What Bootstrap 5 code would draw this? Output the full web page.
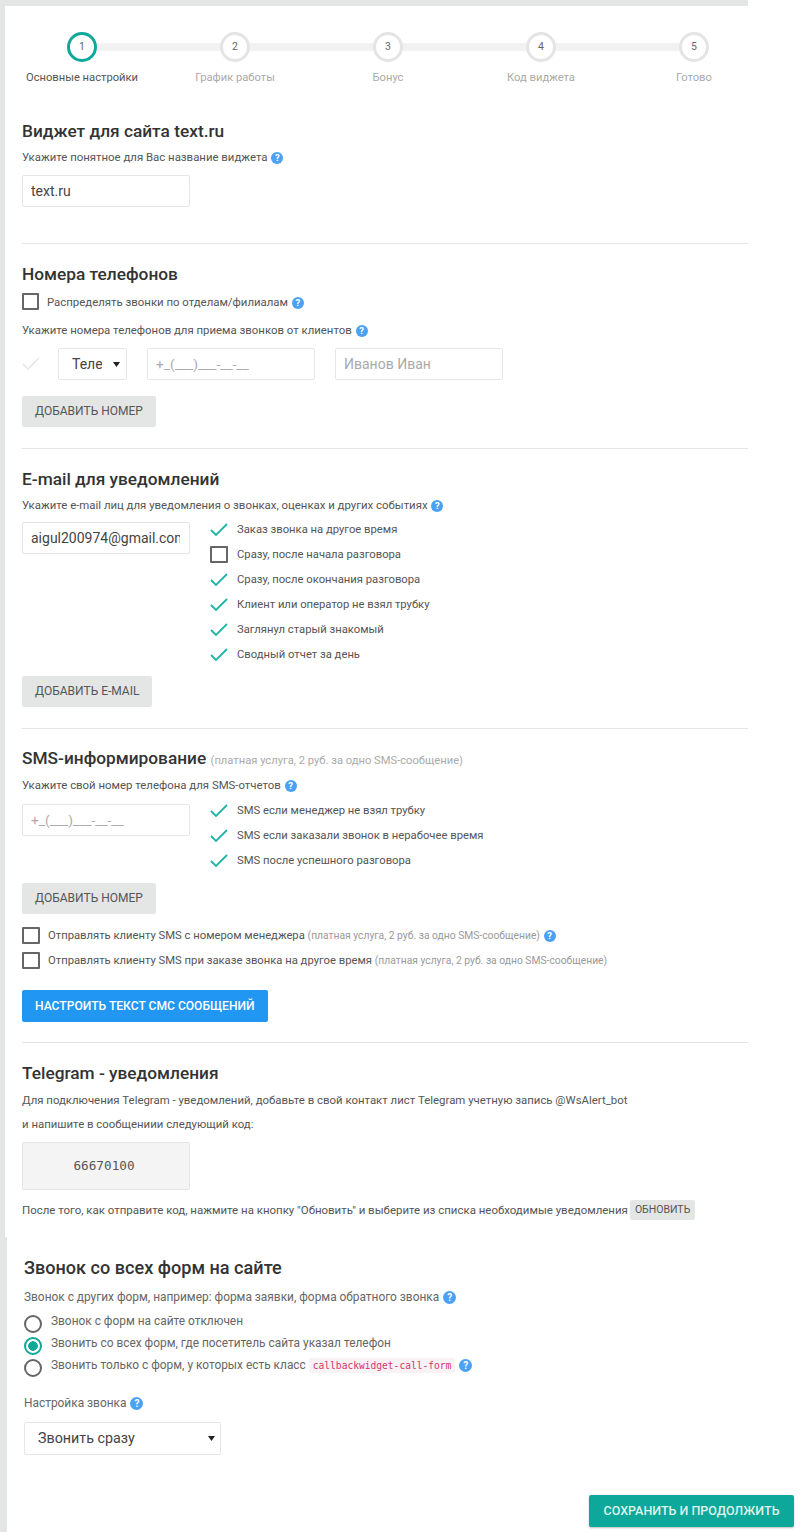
<!DOCTYPE html>
<html lang="ru">
<head>
    <meta charset="UTF-8">
    <meta name="viewport" content="width=device-width, initial-scale=1.0">
    <title>Виджет</title>
    <link href="https://cdn.jsdelivr.net/npm/bootstrap@5.3.3/dist/css/bootstrap.min.css" rel="stylesheet">
    <style>
        body { font-family: Roboto, "Liberation Sans", sans-serif; color: #555; background: #fff; font-size: 11.4px; line-height: 16px; overflow-x: hidden; }
        .sheet { width: 748px; background: #e4e6e5; padding: 6px 0 0 5px; }
        .sheet-inner { background: #fff; height: 1231px; padding: 0 0 0 17px; }
        .sheet-low { border-left: 7px solid #e4e6e5; padding: 0 6px 0 17px; height: 295px; font-size: 11.9px; color: #666; }
        .wz-steps { margin: 0 0 0 -16.5px; padding-top: 26px; }
        .wz-step { flex: none; width: 153px; position: relative; text-align: center; font-size: 11.2px; color: #aaa; }
        .wz-step.on { color: #555; }
        .wz-step:not(:last-child)::after { content: ""; position: absolute; top: 11px; left: 76px; width: 153px; height: 8px; background: #f2f2f2; }
        .wz-dot { position: relative; z-index: 1; width: 30px; height: 30px; margin: 0 auto 8px; border: 3px solid #e4e4e4; border-radius: 50%; background: #fff; font-size: 10.5px; line-height: 24px; color: #666; }
        .wz-step.on .wz-dot { border-color: #0fa899; }
        .wz-step-lbl { height: 16px; white-space: nowrap; }
        .sec-title { font-size: 17.3px; line-height: 22px; font-weight: 500; color: #333; margin: 0; }
        .sec-title small { font-size: 11.2px; font-weight: 400; color: #aaa; line-height: 1; }
        .sec-title-lg { font-size: 18.1px; }
        .sec-rule { margin: 0; border: 0; border-top: 1px solid #e4e6e5; opacity: 1; }
        .help { display: inline-block; width: 12px; height: 12px; margin-left: 1px; border-radius: 50%; background: #4ba1f3; color: #fff; font-size: 9.5px; line-height: 12px; font-weight: 700; text-align: center; vertical-align: 0; }
        .sheet-low .help { width: 13px; height: 13px; line-height: 13px; font-size: 10px; }
        .fld { width: 168px; height: 32px; border: 1px solid #e6e6e6; border-radius: 2px; font-size: 14px; color: #444; padding: 0 9px 0 8px; box-shadow: none; }
        .fld::placeholder { color: #aaa; }
        .fld-mask { font-size: 13.7px; }
        .fld-select { width: 69px; height: 32px; border: 1px solid #e6e6e6; border-radius: 2px; font-size: 14px; color: #444; padding: 0 24px 0 13px; box-shadow: none;
            background-image: url("data:image/svg+xml,%3Csvg xmlns='http://www.w3.org/2000/svg' width='7' height='5'%3E%3Cpath d='M0 0h7L3.5 5z' fill='%23222'/%3E%3C/svg%3E"); background-size: 7px 5px; background-position: right 6px center; }
        .tick { flex: none; width: 18px; height: 14px; }
        .box { flex: none; width: 17px !important; height: 17px; margin: 0 !important; border: 2px solid #666 !important; border-radius: 1px !important; box-shadow: none !important; }
        .dot { flex: none; width: 18px; height: 18px; margin: 0 !important; border: 2px solid #666 !important; box-shadow: none !important; background-color: #fff !important; }
        .dot:checked { border-color: #0fa899 !important; background-image: radial-gradient(circle, #0fa899 0 4.5px, #fff 5px) !important; }
        .radio-row { gap: 9px; height: 22px; }
        .radio-row > span { margin-bottom: 6px; }
        .opt-row { height: 25px; gap: 9px; white-space: nowrap; font-size: 11.25px; }
        .opt-row .tick, .opt-row .box { width: 18px !important; }
        .opt-row-tight { gap: 8px; }
        .btn-flat { height: 31px; border: 0; border-radius: 2px; background: #e4e6e5; color: #555; font-size: 12px; line-height: 31px; padding: 0 13px; text-transform: uppercase; font-weight: 400; }
        .btn-blue { background: #2196f3; color: #fff; font-weight: 500; font-size: 12.1px; }
        .btn-blue:hover { background: #2196f3; color: #fff; }
        .btn-small { height: 20px; line-height: 20px; font-size: 10.5px; padding: 0 5px; margin-left: 2px; }
        .btn-save { width: 205px; height: 32px; border: 0; border-radius: 2px; background: #0da899; color: #dff3f0; font-size: 12.5px; font-weight: 500; line-height: 32px; padding: 0; box-shadow: 0 1px 2px rgba(0,0,0,.25); }
        .btn-save:hover { background: #0da899; color: #dff3f0; }
        .code-box { width: 168px; height: 48px; background: #f4f4f4; border: 1px solid #e6e6e6; border-radius: 2px; font-family: "DejaVu Sans Mono", "Liberation Mono", monospace; font-size: 12.7px; line-height: 46px; text-align: center; color: #555; padding-right: 4px; }
        .refresh-line { font-size: 11.46px; }
        .tip { color: #999; font-size: 10.3px; }
        .pink { font-family: "DejaVu Sans Mono", "Liberation Mono", monospace; font-size: 9.6px; color: #d6336c; background: #f9f2f4; padding: 2px 4px; border-radius: 2px; }
        .sel-wide { width: 197px; height: 33px; font-size: 14.3px; padding-left: 13px; background-position: right 5px center; }
    </style>
</head>
<body>
    <div class="sheet">
        <div class="sheet-inner">
            <div class="wz-steps d-flex">
                <div class="wz-step on"><div class="wz-dot">1</div><div class="wz-step-lbl">Основные настройки</div></div>
                <div class="wz-step"><div class="wz-dot">2</div><div class="wz-step-lbl">График работы</div></div>
                <div class="wz-step"><div class="wz-dot">3</div><div class="wz-step-lbl">Бонус</div></div>
                <div class="wz-step"><div class="wz-dot">4</div><div class="wz-step-lbl">Код виджета</div></div>
                <div class="wz-step"><div class="wz-dot">5</div><div class="wz-step-lbl">Готово</div></div>
            </div>

            <h5 class="sec-title" style="margin-top:34px">Виджет для сайта text.ru</h5>
            <div style="margin-top:7px;margin-bottom:10px">Укажите понятное для Вас название виджета <span class="help">?</span></div>
            <input type="text" class="form-control fld" value="text.ru">
            <hr class="sec-rule" style="margin-top:36px">

            <h5 class="sec-title" style="margin-top:19px">Номера телефонов</h5>
            <div class="d-flex align-items-center" style="gap:8px;margin-top:8px">
                <input class="form-check-input box" type="checkbox">
                <span>Распределять звонки по отделам/филиалам <span class="help">?</span></span>
            </div>
            <div style="margin-top:12px">Укажите номера телефонов для приема звонков от клиентов <span class="help">?</span></div>
            <div class="d-flex align-items-center" style="margin-top:10px">
                <svg class="tick" viewBox="0 0 18 14"><path d="M1 7l5 5L17 1" fill="none" stroke="#e6e6e6" stroke-width="1.6"/></svg>
                <select class="form-select fld-select" style="margin-left:18px"><option>Телефон</option></select>
                <input type="text" class="form-control fld fld-mask" style="margin-left:20px" placeholder="+_(___)___-__-__">
                <input type="text" class="form-control fld" style="margin-left:20px" placeholder="Иванов Иван">
            </div>
            <button class="btn btn-flat d-block" style="margin-top:16px">Добавить номер</button>
            <hr class="sec-rule" style="margin-top:21px">

            <h5 class="sec-title" style="margin-top:19px">E-mail для уведомлений</h5>
            <div style="margin-top:7px">Укажите e-mail лиц для уведомления о звонках, оценках и других событиях <span class="help">?</span></div>
            <div class="d-flex" style="margin-top:9px;gap:20px">
                <input type="text" class="form-control fld" value="aigul200974@gmail.com">
                <div style="margin-top:-5px">
                    <div class="opt-row d-flex align-items-center"><svg class="tick" viewBox="0 0 18 14"><path d="M1 7l5 5L17 1" fill="none" stroke="#1fb5a6" stroke-width="1.8"/></svg>Заказ звонка на другое время</div>
                    <div class="opt-row d-flex align-items-center"><input class="form-check-input box" type="checkbox">Сразу, после начала разговора</div>
                    <div class="opt-row d-flex align-items-center"><svg class="tick" viewBox="0 0 18 14"><path d="M1 7l5 5L17 1" fill="none" stroke="#1fb5a6" stroke-width="1.8"/></svg>Сразу, после окончания разговора</div>
                    <div class="opt-row d-flex align-items-center"><svg class="tick" viewBox="0 0 18 14"><path d="M1 7l5 5L17 1" fill="none" stroke="#1fb5a6" stroke-width="1.8"/></svg>Клиент или оператор не взял трубку</div>
                    <div class="opt-row d-flex align-items-center"><svg class="tick" viewBox="0 0 18 14"><path d="M1 7l5 5L17 1" fill="none" stroke="#1fb5a6" stroke-width="1.8"/></svg>Заглянул старый знакомый</div>
                    <div class="opt-row d-flex align-items-center"><svg class="tick" viewBox="0 0 18 14"><path d="M1 7l5 5L17 1" fill="none" stroke="#1fb5a6" stroke-width="1.8"/></svg>Сводный отчет за день</div>
                </div>
            </div>
            <button class="btn btn-flat d-block" style="margin-top:9px">Добавить e-mail</button>
            <hr class="sec-rule" style="margin-top:21px">

            <h5 class="sec-title" style="margin-top:18px">SMS-информирование <small>(платная услуга, 2 руб. за одно SMS-сообщение)</small></h5>
            <div style="margin-top:8px">Укажите свой номер телефона для SMS-отчетов <span class="help">?</span></div>
            <div class="d-flex" style="margin-top:11px;gap:20px">
                <input type="text" class="form-control fld fld-mask" placeholder="+_(___)___-__-__">
                <div style="margin-top:-6px">
                    <div class="opt-row d-flex align-items-center"><svg class="tick" viewBox="0 0 18 14"><path d="M1 7l5 5L17 1" fill="none" stroke="#1fb5a6" stroke-width="1.8"/></svg>SMS если менеджер не взял трубку</div>
                    <div class="opt-row d-flex align-items-center"><svg class="tick" viewBox="0 0 18 14"><path d="M1 7l5 5L17 1" fill="none" stroke="#1fb5a6" stroke-width="1.8"/></svg>SMS если заказали звонок в нерабочее время</div>
                    <div class="opt-row d-flex align-items-center"><svg class="tick" viewBox="0 0 18 14"><path d="M1 7l5 5L17 1" fill="none" stroke="#1fb5a6" stroke-width="1.8"/></svg>SMS после успешного разговора</div>
                </div>
            </div>
            <button class="btn btn-flat d-block" style="margin-top:10px">Добавить номер</button>
            <div class="opt-row opt-row-tight d-flex align-items-center" style="margin-top:9px"><input class="form-check-input box" type="checkbox"><span>Отправлять клиенту SMS с номером менеджера <span class="tip">(платная услуга, 2 руб. за одно SMS-сообщение)</span> <span class="help">?</span></span></div>
            <div class="opt-row opt-row-tight d-flex align-items-center"><input class="form-check-input box" type="checkbox"><span>Отправлять клиенту SMS при заказе звонка на другое время <span class="tip">(платная услуга, 2 руб. за одно SMS-сообщение)</span></span></div>
            <button class="btn btn-flat btn-blue d-block" style="margin-top:17px;height:32px">Настроить текст смс сообщений</button>
            <hr class="sec-rule" style="margin-top:20px">

            <h5 class="sec-title" style="margin-top:19px">Telegram - уведомления</h5>
            <div style="margin-top:8px">Для подключения Telegram - уведомлений, добавьте в свой контакт лист Telegram учетную запись @WsAlert_bot</div>
            <div style="margin-top:8px">и напишите в сообщениии следующий код:</div>
            <div class="code-box" style="margin-top:10px">66670100</div>
            <div class="refresh-line d-flex align-items-center" style="margin-top:10px">После того, как отправите код, нажмите на кнопку "Обновить" и выберите из списка необходимые уведомления <button class="btn btn-flat btn-small">Обновить</button></div>
        </div>
    </div>
    <div class="sheet-low">
        <h5 class="sec-title sec-title-lg" style="padding-top:20px">Звонок со всех форм на сайте</h5>
        <div style="margin-top:10px">Звонок с других форм, например: форма заявки, форма обратного звонка <span class="help">?</span></div>
        <div class="radio-row d-flex align-items-center" style="margin-top:8px"><input class="form-check-input dot" type="radio" name="calls"><span>Звонок с форм на сайте отключен</span></div>
        <div class="radio-row d-flex align-items-center"><input class="form-check-input dot" type="radio" name="calls" checked><span>Звонить со всех форм, где посетитель сайта указал телефон</span></div>
        <div class="radio-row d-flex align-items-center"><input class="form-check-input dot" type="radio" name="calls"><span>Звонить только с форм, у которых есть класс <code class="pink">callbackwidget-call-form</code> <span class="help">?</span></span></div>
        <div style="margin-top:16px">Настройка звонка <span class="help">?</span></div>
        <select class="form-select fld-select sel-wide" style="margin-top:11px"><option>Звонить сразу</option></select>
        <div class="d-flex justify-content-end" style="margin-top:40px">
            <button class="btn btn-save text-uppercase">Сохранить и продолжить</button>
        </div>
    </div>
    <script src="https://cdn.jsdelivr.net/npm/bootstrap@5.3.3/dist/js/bootstrap.bundle.min.js"></script>
</body>
</html>
